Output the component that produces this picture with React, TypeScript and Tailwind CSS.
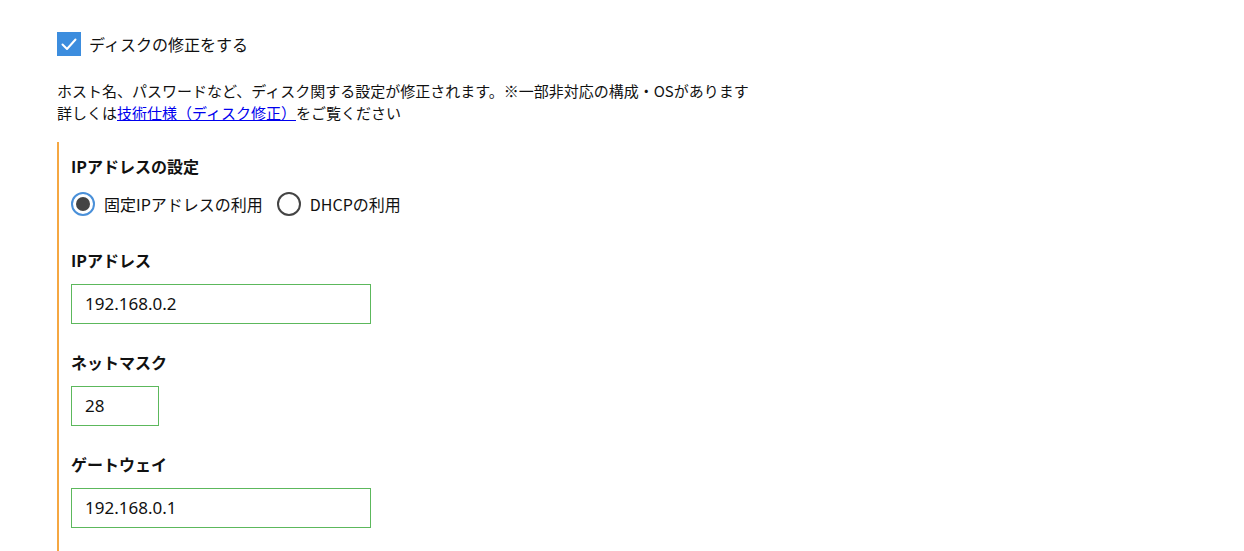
import React from "react";

const font = { fontFamily: '"Noto Sans CJK JP", "Noto Sans", sans-serif' };

function CheckBox() {
  return (
    <div className="w-6 h-6 bg-[#3c8dde] flex items-center justify-center">
      <svg width="18" height="18" viewBox="0 0 18 18" fill="none">
        <path d="M2.5 9.5 L7 14 L15.5 4.5" stroke="#fff" strokeWidth="2" strokeLinecap="round" strokeLinejoin="round" />
      </svg>
    </div>
  );
}

function Radio({ checked, label }: { checked?: boolean; label: string }) {
  return (
    <label className="flex items-center gap-[9px] text-[16px] text-[#111]">
      {checked ? (
        <span className="w-6 h-6 rounded-full border-2 border-[#4a90d9] flex items-center justify-center">
          <span className="w-[14px] h-[14px] rounded-full bg-[#444]" />
        </span>
      ) : (
        <span className="w-6 h-6 rounded-full border-2 border-[#444]" />
      )}
      <span>{label}</span>
    </label>
  );
}

function Field({ label, value, width }: { label: string; value: string; width: string }) {
  return (
    <div className="flex flex-col gap-3">
      <div className="text-[16px] font-bold leading-6 text-[#111]">{label}</div>
      <div
        className={`${width} h-10 border border-[#5cb85c] flex items-center px-[13px] text-[17px] text-[#111]`}
        style={{ fontFamily: '"Noto Sans", sans-serif' }}
      >
        {value}
      </div>
    </div>
  );
}

export default function App() {
  return (
    <div className="w-[1244px] h-[551px] overflow-hidden bg-white pl-[57px] pt-8" style={font}>
      <div className="flex items-center gap-2">
        <CheckBox />
        <span className="text-[16px] text-[#111]">ディスクの修正をする</span>
      </div>

      <div className="mt-6 text-[15px] leading-[22px] text-[#111]">
        <p>ホスト名、パスワードなど、ディスク関する設定が修正されます。※一部非対応の構成・OSがあります</p>
        <p>
          詳しくは<a href="#" className="text-[#0000ee] underline">技術仕様（ディスク修正）</a>をご覧ください
        </p>
      </div>

      <div className="mt-[18px] border-l-2 border-[#f5a742] pl-3 pt-3 pb-8 flex flex-col">
        <div className="text-[16px] font-bold leading-6 text-[#111]">IPアドレスの設定</div>
        <div className="mt-[14px] flex items-center gap-[14px]">
          <Radio checked label="固定IPアドレスの利用" />
          <Radio label="DHCPの利用" />
        </div>
        <div className="mt-[32px] flex flex-col gap-[26px]">
          <Field label="IPアドレス" value="192.168.0.2" width="w-[300px]" />
          <Field label="ネットマスク" value="28" width="w-[88px]" />
          <Field label="ゲートウェイ" value="192.168.0.1" width="w-[300px]" />
        </div>
      </div>
    </div>
  );
}
